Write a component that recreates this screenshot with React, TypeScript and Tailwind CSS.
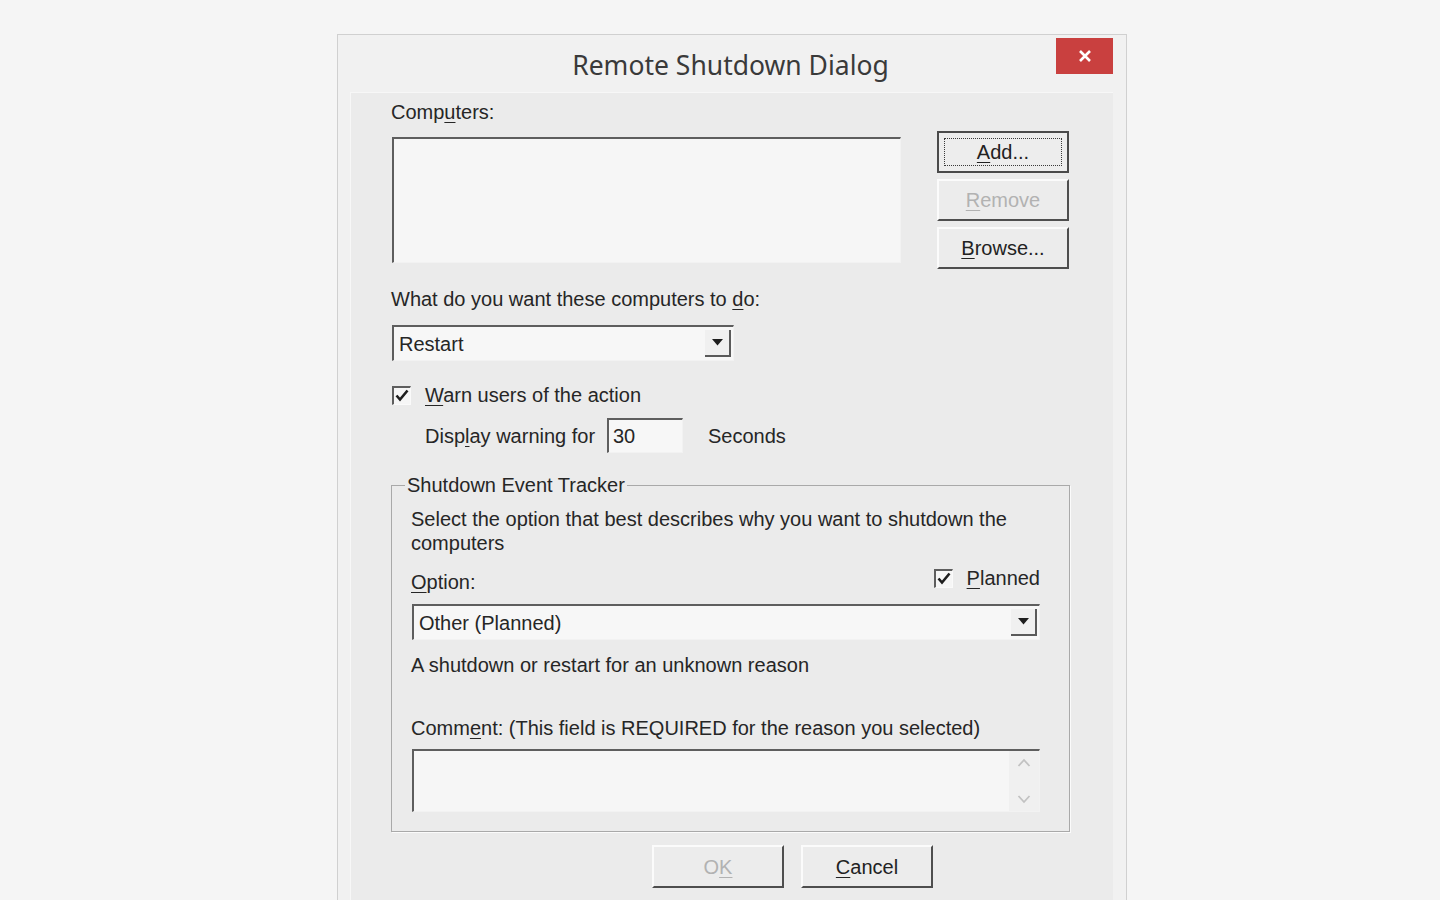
import type { ReactNode } from 'react';

/** Underlined access key letter */
function K({ children }: { children: ReactNode }) {
  return <span className="underline underline-offset-[3px] decoration-1">{children}</span>;
}

function Check() {
  return (
    <span className="flex h-[19px] w-[19px] items-center justify-center border-t-2 border-l-2 border-r border-b border-t-[#5e5e5e] border-l-[#5e5e5e] border-r-[#fafafa] border-b-[#fafafa] bg-[#f6f6f6]">
      <svg width="14" height="13" viewBox="0 0 14 13">
        <path d="M1.5 6.5 L5 10.5 L12.5 1.5" fill="none" stroke="#1e1e1e" strokeWidth="2.6" />
      </svg>
    </span>
  );
}

function Combo({ value, width }: { value: string; width: string }) {
  return (
    <div className={`flex h-[36px] ${width} items-stretch border-t-2 border-l-2 border-r border-b border-t-[#5e5e5e] border-l-[#5e5e5e] border-r-[#f2f2f2] border-b-[#f2f2f2] bg-[#f7f7f7]`}>
      <div className="flex flex-1 items-center pl-[5px]">{value}</div>
      <div className="my-[3px] mr-[2px] flex w-[26px] items-center justify-center border-r-2 border-b-2 border-r-[#5a5a5a] border-b-[#5a5a5a] bg-[#f0f0f0]">
        <svg width="11" height="7" viewBox="0 0 11 7">
          <path d="M0 0 H11 L5.5 6.5 Z" fill="#1e1e1e" />
        </svg>
      </div>
    </div>
  );
}

function Btn({ children, disabled, focused, className = '' }: { children: ReactNode; disabled?: boolean; focused?: boolean; className?: string }) {
  if (focused) {
    return (
      <div className={`h-[42px] w-[132px] border-2 border-[#4a4a4a] bg-[#ededed] p-[5px] ${className}`}>
        <div className="flex h-full w-full items-center justify-center border border-dotted border-[#3a3a3a] text-[#222]">
          {children}
        </div>
      </div>
    );
  }
  return (
    <div
      className={`flex h-[42px] w-[132px] items-center justify-center border-2 border-t-[#fbfbfb] border-l-[#fbfbfb] border-r-[#4e4e4e] border-b-[#4e4e4e] bg-[#ececec] ${
        disabled ? 'text-[#b2b2b2]' : 'text-[#222]'
      } ${className}`}
    >
      {children}
    </div>
  );
}

export default function App() {
  return (
    <div className="h-[900px] overflow-hidden bg-[#f5f5f5] pt-[34px] font-['Liberation_Sans',Arial,sans-serif] text-[20px] leading-[24px] text-[#262626]">
      {/* Dialog frame */}
      <div className="relative ml-[337px] h-[900px] w-[790px] border border-[#d0d0d0] bg-[#f1f1f1]">
        {/* Title bar */}
        <div className="flex h-[57px] items-center justify-center pt-[3px]">
          <span className="ml-[-3px] font-['Noto_Sans',sans-serif] text-[26.5px] text-[#3a3a3a]">Remote Shutdown Dialog</span>
        </div>
        <button className="absolute top-[3px] right-[13px] flex h-[36px] w-[57px] items-center justify-center bg-[#c9403f]">
          <svg width="14" height="14" viewBox="0 0 14 14">
            <path d="M2 2 L12 12 M12 2 L2 12" stroke="#fff" strokeWidth="2.6" />
          </svg>
        </button>

        {/* Client area */}
        <div className="ml-[12px] h-[850px] w-[763px] bg-[#ebebeb] pt-[8px] pl-[41px] shadow-[inset_1px_1px_0_#f7f7f7]">
          {/* Computers list + buttons */}
          <div className="flex items-start">
            <div className="w-[510px]">
              <div>
                Comp<K>u</K>ters:
              </div>
              <div className="mt-[13px] ml-[1px] h-[126px] w-[509px] border-t-2 border-l-2 border-r border-b border-t-[#5e5e5e] border-l-[#5e5e5e] border-r-[#f2f2f2] border-b-[#f2f2f2] bg-[#f6f6f6]" />
            </div>
            <div className="mt-[31px] ml-[36px] flex flex-col gap-[6px]">
              <Btn focused>
                <span>
                  <K>A</K>dd...
                </span>
              </Btn>
              <Btn disabled>
                <span>
                  <K>R</K>emove
                </span>
              </Btn>
              <Btn>
                <span>
                  <K>B</K>rowse...
                </span>
              </Btn>
            </div>
          </div>

          {/* Action */}
          <div className="mt-[18px]">
            What do you want these computers to <K>d</K>o:
          </div>
          <div className="mt-[14px] ml-[1px]">
            <Combo value="Restart" width="w-[342px]" />
          </div>

          <div className="mt-[22px] ml-[1px] flex items-center gap-[14px]">
            <Check />
            <span>
              <K>W</K>arn users of the action
            </span>
          </div>

          <div className="mt-[11px] flex h-[35px] items-center pl-[34px]">
            <span className="w-[182px]">
              Disp<K>l</K>ay warning for
            </span>
            <div className="flex h-[35px] w-[76px] items-center border-t-2 border-l-2 border-r border-b border-t-[#5e5e5e] border-l-[#5e5e5e] border-r-[#f2f2f2] border-b-[#f2f2f2] bg-[#f7f7f7] pl-[4px]">
              30
            </div>
            <span className="ml-[25px]">Seconds</span>
          </div>

          {/* Shutdown Event Tracker */}
          <fieldset className="mt-[20px] w-[679px] border border-[#a9a9a9] shadow-[1px_1px_0_#fbfbfb]">
            <legend className="ml-[13px] px-[2px]">Shutdown Event Tracker</legend>
            <div className="pr-[29px] pb-[19px] pl-[19px]">
              <div className="pt-[10px]">
                Select the option that best describes why you want to shutdown the
                <br />
                computers
              </div>
              <div className="mt-[11px] flex items-start justify-between">
                <span className="mt-[4px]">
                  <K>O</K>ption:
                </span>
                <div className="flex h-[24px] items-center gap-[14px]">
                  <Check />
                  <span>
                    <K>P</K>lanned
                  </span>
                </div>
              </div>
              <div className="mt-[10px] ml-[1px]">
                <Combo value="Other (Planned)" width="w-[628px]" />
              </div>
              <div className="mt-[13px]">A shutdown or restart for an unknown reason</div>
              <div className="mt-[39px]">
                Comm<K>e</K>nt: (This field is REQUIRED for the reason you selected)
              </div>
              <div className="mt-[9px] ml-[1px] flex h-[63px] w-[628px] border-t-2 border-l-2 border-r border-b border-t-[#5e5e5e] border-l-[#5e5e5e] border-r-[#f2f2f2] border-b-[#f2f2f2] bg-[#f6f6f6]">
                <div className="flex-1" />
                <div className="flex w-[30px] flex-col items-center justify-between bg-[#f0f0f0] py-[7px]">
                  <svg width="14" height="9" viewBox="0 0 14 9">
                    <path d="M1.5 8 L7 2 L12.5 8" fill="none" stroke="#c2c2c2" strokeWidth="1.8" />
                  </svg>
                  <svg width="14" height="9" viewBox="0 0 14 9">
                    <path d="M1.5 1 L7 7 L12.5 1" fill="none" stroke="#c2c2c2" strokeWidth="1.8" />
                  </svg>
                </div>
              </div>
            </div>
          </fieldset>

          {/* OK / Cancel */}
          <div className="mt-[13px] ml-[261px] flex gap-[17px]">
            <Btn disabled className="h-[43px] w-[131px]">
              <span>
                O<K>K</K>
              </span>
            </Btn>
            <Btn className="h-[43px] w-[131px]">
              <span>
                <K>C</K>ancel
              </span>
            </Btn>
          </div>
        </div>
      </div>
    </div>
  );
}
